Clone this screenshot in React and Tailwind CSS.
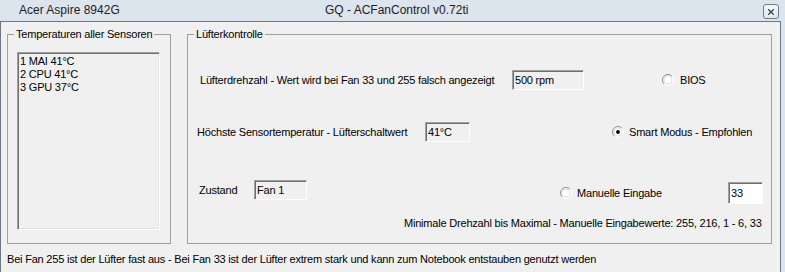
import React from 'react'

function Radio({ checked }) {
  return (
    <svg width="12" height="12" viewBox="0 0 12 12" className="shrink-0">
      <circle cx="6" cy="6" r="5.5" fill="#f4f4f4" />
      <path d="M2.1 9.9 A5.5 5.5 0 0 1 9.9 2.1" stroke="#8f8f8f" fill="none" />
      <path d="M9.9 2.1 A5.5 5.5 0 0 1 2.1 9.9" stroke="#ffffff" fill="none" />
      <circle cx="6" cy="6" r="4" fill="#ffffff" stroke="#dcdcdc" strokeWidth="0.8" />
      {checked && <circle cx="6" cy="6" r="1.9" fill="#000000" />}
    </svg>
  )
}

function Field({ children, className = '' }) {
  return (
    <div
      className={`flex items-center border border-t-[#a0a0a0] border-l-[#a0a0a0] border-r-white border-b-white pl-[2px] shadow-[inset_1px_1px_0_#6e6e6e] ${className}`}
    >
      {children}
    </div>
  )
}

export default function App() {
  return (
    <div className="h-[272px] w-[785px] overflow-hidden bg-[#dce4ed] font-['Liberation_Sans',Arial,sans-serif] text-[11px] leading-[13px] tracking-[-0.2px] text-black">
      {/* title bar */}
      <div className="flex h-[21px] items-center text-[12px] tracking-normal text-[#1e1e1e]">
        <span className="w-[325px] shrink-0 pl-[19px]">Acer Aspire 8942G</span>
        <span>GQ - ACFanControl v0.72ti</span>
        <div className="mr-[6px] ml-auto mt-[4px] grid h-[15px] w-[16px] place-items-center self-start rounded-[3px] border border-[#6f7c8c] bg-gradient-to-b from-[#f4f6f9] to-[#dfe5ec]">
          <svg width="8" height="8" viewBox="0 0 8 8">
            <path d="M1 1 L7 7 M7 1 L1 7" stroke="#ffffff" strokeWidth="3" />
            <path d="M1.2 1.2 L6.8 6.8 M6.8 1.2 L1.2 6.8" stroke="#3a3f46" strokeWidth="1.4" />
          </svg>
        </div>
      </div>

      {/* client area */}
      <div className="h-[251px] w-[781px] border-t border-l border-r border-[#6d7783] bg-[#f0f0f0]">
        <div className="flex pt-[6px] pl-[6px]">
          <fieldset className="m-0 h-[216px] w-[164px] border border-[#a0a0a0] p-0">
            <legend className="ml-[6px] px-[2px]">Temperaturen aller Sensoren</legend>
            <div className="mt-[11px] ml-[9px] h-[178px] w-[143px] border border-t-[#a0a0a0] border-l-[#a0a0a0] border-r-white border-b-white bg-[#f0f0f0] pt-[2px] pl-[2px] shadow-[inset_1px_1px_0_#6e6e6e,inset_-1px_-1px_0_#e3e3e3]">
              <div>1 MAI 41°C</div>
              <div>2 CPU 41°C</div>
              <div>3 GPU 37°C</div>
            </div>
          </fieldset>

          <fieldset className="m-0 ml-[16px] h-[216px] w-[585px] border border-[#a0a0a0] p-0">
            <legend className="ml-[6px] px-[2px]">Lüfterkontrolle</legend>

            <div className="mt-[29px] flex h-[20px] items-center">
              <div className="w-[324px] shrink-0 pl-[12px]">Lüfterdrehzahl - Wert wird bei Fan 33 und 255 falsch angezeigt</div>
              <Field className="h-[20px] w-[72px]">500 rpm</Field>
              <div className="ml-[78px] flex items-center gap-[6px]">
                <Radio />
                <span>BIOS</span>
              </div>
            </div>

            <div className="mt-[32px] flex h-[20px] items-center">
              <div className="w-[237px] shrink-0 pl-[9px]">Höchste Sensortemperatur - Lüfterschaltwert</div>
              <Field className="h-[20px] w-[45px]">41°C</Field>
              <div className="ml-[142px] flex items-center gap-[5px]">
                <Radio checked />
                <span>Smart Modus - Empfohlen</span>
              </div>
            </div>

            <div className="mt-[38px] flex h-[26px] items-center">
              <div className="flex h-[20px] items-center self-start">
                <div className="w-[66px] shrink-0 pl-[11px]">Zustand</div>
                <Field className="h-[20px] w-[53px]">Fan 1</Field>
              </div>
              <div className="ml-[253px] flex items-center gap-[5px]">
                <Radio />
                <span>Manuelle Eingabe</span>
              </div>
              <Field className="mr-[8px] ml-auto h-[22px] w-[35px] bg-white">33</Field>
            </div>

            <div className="mt-[11px] whitespace-nowrap pl-[216px]">
              Minimale Drehzahl bis Maximal - Manuelle Eingabewerte: 255, 216, 1 - 6, 33
            </div>
          </fieldset>
        </div>

        <div className="whitespace-nowrap pt-[9px] pl-[6px]">
          Bei Fan 255 ist der Lüfter fast aus - Bei Fan 33 ist der Lüfter extrem stark und kann zum Notebook entstauben genutzt werden
        </div>
      </div>
    </div>
  )
}
